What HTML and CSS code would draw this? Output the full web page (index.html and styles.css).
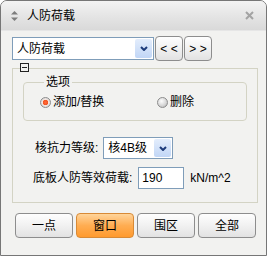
FILE: index.html
```html
<!DOCTYPE html>
<html lang="zh">
<head>
    <meta charset="UTF-8">
    <title>人防荷载</title>
    <link rel="stylesheet" href="styles.css">
</head>
<body>
    <div class="window">
        <div class="titlebar">
            <svg class="title-icon" width="7" height="10" viewBox="0 0 7 10">
                <polygon points="3.5,0 7,3.5 0,3.5" fill="#7d7d7d"/>
                <polygon points="0,6.5 7,6.5 3.5,10" fill="#7d7d7d"/>
            </svg>
            <span class="title">人防荷载</span>
            <svg class="close" width="9" height="9" viewBox="0 0 9 9">
                <path d="M1 1 L8 8 M8 1 L1 8" stroke="#a3a3a3" stroke-width="2"/>
            </svg>
        </div>

        <div class="content">
            <div class="top-row">
                <div class="combo wide">
                    <span>人防荷载</span>
                    <span class="drop">
                        <svg width="8" height="5" viewBox="0 0 8 5"><path d="M1 1 L4 4 L7 1" fill="none" stroke="#1d3b7a" stroke-width="2"/></svg>
                    </span>
                </div>
                <button class="btn nav">&lt; &lt;</button>
                <button class="btn nav">&gt; &gt;</button>
            </div>

            <div class="group">
                <span class="toggle"></span>
                <fieldset class="options">
                    <legend>选项</legend>
                    <div class="radio-row">
                        <label class="radio-item"><span class="radio checked"></span>添加/替换</label>
                        <label class="radio-item"><span class="radio"></span>删除</label>
                    </div>
                </fieldset>

                <div class="field-row first">
                    <span class="label">核抗力等级:</span>
                    <div class="combo small">
                        <span>核4B级</span>
                        <span class="drop">
                            <svg width="8" height="5" viewBox="0 0 8 5"><path d="M1 1 L4 4 L7 1" fill="none" stroke="#1d3b7a" stroke-width="2"/></svg>
                        </span>
                    </div>
                </div>

                <div class="field-row second">
                    <span class="label">底板人防等效荷载:</span>
                    <input class="text-input" type="text" value="190">
                    <span class="unit">kN/m^2</span>
                </div>
            </div>

            <div class="button-row">
                <button class="btn action">一点</button>
                <button class="btn action active">窗口</button>
                <button class="btn action">围区</button>
                <button class="btn action">全部</button>
            </div>
        </div>
    </div>
</body>
</html>
```

FILE: styles.css
```css
body {
    margin: 0;
    background: #fff;
    font-family: "Liberation Sans", "Noto Sans CJK SC", sans-serif;
    font-size: 12px;
    line-height: 14px;
    color: #000;
}

.window {
    width: 265px;
    height: 254px;
    border: 1px solid #767676;
    border-radius: 7px 7px 0 0;
    background: #f2f2f0;
    overflow: hidden;
}

.titlebar {
    height: 30px;
    display: flex;
    align-items: center;
    padding-left: 10px;
    background: linear-gradient(#f3f3f3, #e4e4e4 55%, #d9d9d9);
    border-bottom: 1px solid #e6e6e6;
    box-sizing: border-box;
}

.title {
    margin-left: 9px;
}

.close {
    margin-left: auto;
    margin-right: 12px;
}

.content {
    padding: 5px 0 0 11px;
}

.top-row {
    display: flex;
    align-items: center;
    gap: 1px;
}

.combo {
    display: flex;
    align-items: center;
    box-sizing: border-box;
    border: 1px solid #7f9db9;
    background: #fff;
    padding-left: 4px;
}

.combo.wide {
    width: 142px;
    height: 23px;
}

.combo.small {
    width: 70px;
    height: 22px;
    margin-left: 5px;
}

.drop {
    margin-left: auto;
    margin-right: 1px;
    width: 17px;
    height: calc(100% - 2px);
    display: flex;
    align-items: center;
    justify-content: center;
    background: linear-gradient(#e3edfc, #c1d6f6);
    border-radius: 2px;
}

.btn {
    font: inherit;
    color: #000;
    box-sizing: border-box;
    border: 1px solid #8d8d8d;
    border-radius: 4px;
    background: linear-gradient(#fefefe, #f1f1f1 50%, #e2e2e2);
    padding: 0;
}

.nav {
    width: 28px;
    height: 25px;
}

.group {
    position: relative;
    width: 246px;
    box-sizing: border-box;
    margin-top: 7px;
    border: 1px solid #d3d3c4;
    padding: 6px 10px 13px 10px;
}

.toggle {
    position: absolute;
    left: 7px;
    top: -6px;
    width: 9px;
    height: 9px;
    border: 1px solid #222;
    box-sizing: border-box;
    background: #f2f2f0;
}

.toggle::after {
    content: "";
    position: absolute;
    left: 1px;
    right: 1px;
    top: 3px;
    height: 1px;
    background: #222;
}

.options {
    margin: 0;
    padding: 5px 0 10px 16px;
    border: 1px solid #d3d3c4;
    border-radius: 4px;
}

.options legend {
    padding: 0 2px;
    margin-left: 4px;
}

.radio-row {
    display: grid;
    grid-template-columns: 117px auto;
    height: 16px;
    align-items: center;
}

.radio-item {
    display: flex;
    align-items: center;
    gap: 2px;
}

.radio {
    width: 11px;
    height: 11px;
    box-sizing: border-box;
    border-radius: 50%;
    border: 1px solid #8c8c8c;
    background: radial-gradient(circle at 40% 35%, #fdfdfd, #d4d4d4 60%, #a9a9a9);
}

.radio.checked {
    background: radial-gradient(circle, #ff6a3c 0, #f2531f 2.5px, #f6e4dc 3px, #dcdcdc 4.5px);
}

.field-row {
    display: flex;
    align-items: center;
}

.field-row.first {
    margin-top: 16px;
    margin-left: 12px;
}

.field-row.second {
    margin-top: 8px;
    margin-left: 10px;
}

.text-input {
    width: 46px;
    height: 22px;
    box-sizing: border-box;
    margin: 0 0 0 6px;
    border: 1px solid #7f9db9;
    padding: 0 0 0 3px;
    font: inherit;
    color: #000;
    background: #fff;
}

.unit {
    margin-left: 6px;
}

.button-row {
    display: flex;
    gap: 3px;
    margin-top: 10px;
    padding-left: 3px;
}

.action {
    width: 58px;
    height: 25px;
}

.action.active {
    border-color: #d88a36;
    background: linear-gradient(#ffd49a, #ffad52 50%, #ff9a2e);
}
```
